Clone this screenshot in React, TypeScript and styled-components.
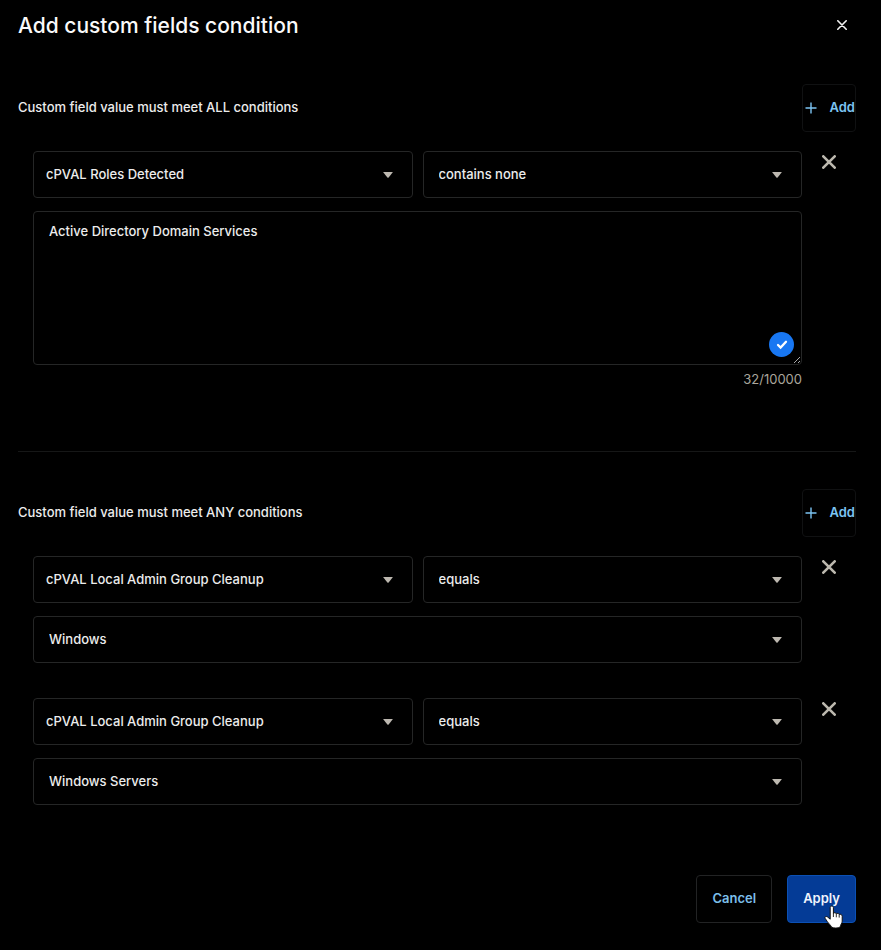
import React, { useId, useState } from "react";
import styled, { createGlobalStyle } from "styled-components";

const GlobalStyle = createGlobalStyle`
  *, *::before, *::after { box-sizing: border-box; }
  body {
    margin: 0;
    background: #000;
    color: #ececec;
    font-family: Inter, "Liberation Sans", sans-serif;
    font-size: 13px;
    line-height: 20px;
  }
  button, select, textarea { font: inherit; color: inherit; }
`;

const Dialog = styled.main`
  display: flex;
  flex-direction: column;
  padding: 10px 25px 27px 18px;
`;

const Header = styled.header`
  display: flex;
  align-items: center;
  justify-content: space-between;
  height: 30px;
  margin-bottom: 44px;
`;

const Title = styled.h1`
  margin: 0;
  padding-top: 2px;
  font-size: 21px;
  line-height: 30px;
  font-weight: 550;
  color: #fafafa;
`;

const IconButton = styled.button<{ $color: string }>`
  display: grid;
  place-items: center;
  width: 28px;
  height: 22px;
  padding: 0;
  border: 0;
  background: none;
  color: ${(p) => p.$color};
  cursor: pointer;
`;

const Section = styled.section`
  display: flex;
  flex-direction: column;
  gap: 19px;
`;

const SectionHead = styled.div`
  display: flex;
  align-items: center;
  justify-content: space-between;
`;

const SectionTitle = styled.h2`
  margin: 0;
  padding-bottom: 2px;
  font-size: 13px;
  line-height: 20px;
  font-weight: 500;
`;

const AddButton = styled.button`
  display: flex;
  align-items: center;
  justify-content: flex-end;
  gap: 13px;
  width: 54px;
  height: 48px;
  padding: 0 0 2px;
  border: 1px solid #101112;
  border-radius: 4px;
  background: none;
  color: #7cc4f2;
  font-weight: 600;
  cursor: pointer;

  svg { margin-top: 2px; }
`;

const Conditions = styled.div`
  display: flex;
  flex-direction: column;
  gap: 35px;
`;

const Condition = styled.div`
  display: grid;
  grid-template-columns: 1fr 54px;
  align-items: start;
  justify-items: center;
  padding-left: 15px;
`;

const Fields = styled.div`
  display: grid;
  grid-template-columns: 1fr 1fr;
  gap: 13px 10px;
  width: 100%;
`;

const SelectBox = styled.div<{ $wide?: boolean }>`
  display: grid;
  grid-template-columns: 1fr 12px 19px;
  align-items: center;
  grid-column: ${(p) => (p.$wide ? "1 / -1" : "auto")};

  svg {
    grid-area: 1 / 2;
    color: #bdb8b0;
    pointer-events: none;
  }
`;

const Select = styled.select<{ $inset: number }>`
  grid-area: 1 / 1 / 2 / -1;
  appearance: none;
  width: 100%;
  height: 47px;
  padding: 0 40px 2px ${(p) => p.$inset}px;
  border: 1px solid #252626;
  border-radius: 4px;
  background: #000;
  font-weight: 500;
`;

const TextField = styled.div`
  position: relative;
  display: flex;
  flex-direction: column;
  grid-column: 1 / -1;
`;

const TextArea = styled.textarea`
  display: block;
  width: 100%;
  height: 154px;
  padding: 9px 15px;
  border: 1px solid #252626;
  border-radius: 4px;
  background: #000;
  font-weight: 500;
  resize: none;
`;

const Grip = styled.svg`
  position: absolute;
  top: 145px;
  right: 1px;
`;

const CheckBadge = styled.span`
  position: absolute;
  top: 121px;
  right: 8px;
  display: grid;
  place-items: center;
  width: 25px;
  height: 25px;
  border-radius: 50%;
  background: #1877f2;
`;

const Counter = styled.output`
  align-self: flex-end;
  margin-top: 4px;
  color: #aaa69c;
`;

const Divider = styled.hr`
  width: 100%;
  height: 1px;
  margin: 62px 0 37px;
  border: 0;
  background: #161717;
`;

const Footer = styled.footer`
  display: flex;
  justify-content: flex-end;
  gap: 15px;
  margin-top: 70px;
`;

const ActionButton = styled.button<{ $primary?: boolean }>`
  position: relative;
  height: 48px;
  padding: 0 15px 2px;
  border: 1px solid ${(p) => (p.$primary ? "#0b50b4" : "#222324")};
  border-radius: 4px;
  background: ${(p) => (p.$primary ? "#043b96" : "#000")};
  color: ${(p) => (p.$primary ? "#f0f4fc" : "#7cbfea")};
  font-weight: 600;
  cursor: pointer;
`;

const Pointer = styled.svg`
  position: absolute;
  right: 11px;
  bottom: -7px;
`;

function Cross({ size, weight }: { size: number; weight: number }) {
  const end = size - weight / 2;
  const start = weight / 2;
  return (
    <svg width={size} height={size} viewBox={`0 0 ${size} ${size}`} aria-hidden="true">
      <path
        d={`M${start} ${start}L${end} ${end}M${end} ${start}L${start} ${end}`}
        stroke="currentColor"
        strokeWidth={weight}
        strokeLinecap="round"
      />
    </svg>
  );
}

function Dropdown(props: {
  label: string;
  options: string[];
  inset?: number;
  wide?: boolean;
}) {
  const [value, setValue] = useState(props.options[0]);
  return (
    <SelectBox $wide={props.wide}>
      <Select
        aria-label={props.label}
        $inset={props.inset ?? 15}
        value={value}
        onChange={(e) => setValue(e.target.value)}
      >
        {props.options.map((o) => (
          <option key={o}>{o}</option>
        ))}
      </Select>
      <svg width="12" height="8" viewBox="0 0 12 8" aria-hidden="true">
        <path d="M1.6 1H10.4Q11 1 10.6 1.5L6.6 6.4Q6 7 5.4 6.4L1.4 1.5Q1 1 1.6 1Z" fill="currentColor" />
      </svg>
    </SelectBox>
  );
}

function ConditionRow(props: {
  field: string;
  operator: string;
  children: React.ReactNode;
}) {
  return (
    <Condition>
      <Fields>
        <Dropdown label="Custom field" options={[props.field]} inset={12} />
        <Dropdown label="Operator" options={[props.operator]} />
        {props.children}
      </Fields>
      <IconButton $color="#bcb8ae" aria-label="Remove condition">
        <Cross size={14} weight={2.6} />
      </IconButton>
    </Condition>
  );
}

function SectionHeader({ title }: { title: string }) {
  return (
    <SectionHead>
      <SectionTitle>{title}</SectionTitle>
      <AddButton>
        <svg width="12" height="12" viewBox="0 0 12 12" aria-hidden="true">
          <path d="M6 .5V11.5M.5 6H11.5" stroke="currentColor" strokeWidth="1.4" />
        </svg>
        Add
      </AddButton>
    </SectionHead>
  );
}

function ValueText() {
  const id = useId();
  const [text, setText] = useState("Active Directory Domain Services");
  return (
    <TextField>
      <TextArea
        id={id}
        aria-label="Value"
        spellCheck={false}
        value={text}
        onChange={(e) => setText(e.target.value)}
      />
      <CheckBadge>
        <svg width="13" height="11" viewBox="0 0 13 11" aria-hidden="true">
          <path d="M3 6L5.6 8.6L11 2.8" fill="none" stroke="#fff" strokeWidth="2.3" strokeLinecap="round" />
        </svg>
      </CheckBadge>
      <Grip width="8" height="8" viewBox="0 0 8 8" aria-hidden="true">
        <path d="M1 7L7 1M5 7L7 5" stroke="#aaa" strokeWidth="1" />
      </Grip>
      <Counter htmlFor={id}>{text.length}/10000</Counter>
    </TextField>
  );
}

export default function App() {
  return (
    <>
      <GlobalStyle />
      <Dialog>
        <Header>
          <Title>Add custom fields condition</Title>
          <IconButton $color="#f2f2f2" aria-label="Close">
            <Cross size={10} weight={1.6} />
          </IconButton>
        </Header>
        <Section>
          <SectionHeader title="Custom field value must meet ALL conditions" />
          <Conditions>
            <ConditionRow field="cPVAL Roles Detected" operator="contains none">
              <ValueText />
            </ConditionRow>
          </Conditions>
        </Section>
        <Divider />
        <Section>
          <SectionHeader title="Custom field value must meet ANY conditions" />
          <Conditions>
            <ConditionRow field="cPVAL Local Admin Group Cleanup" operator="equals">
              <Dropdown label="Value" options={["Windows", "Windows Servers"]} wide />
            </ConditionRow>
            <ConditionRow field="cPVAL Local Admin Group Cleanup" operator="equals">
              <Dropdown label="Value" options={["Windows Servers", "Windows"]} wide />
            </ConditionRow>
          </Conditions>
        </Section>
        <Footer>
          <ActionButton>Cancel</ActionButton>
          <ActionButton $primary>
            Apply
            <Pointer width="20" height="24" viewBox="0 0 20 24" aria-hidden="true">
              <path
                d="M6.2 2.6C6.2 .6 9.4 .6 9.4 2.6V8.2C10 7.4 12.1 7.6 12.3 8.8C13 8 15 8.3 15.2 9.5C16.2 8.9 18.2 9.3 18.2 11.3V16.2C18.2 18.2 16.4 19.6 16.2 22C14 23.4 9.6 23.4 7.4 22C7.2 20.6 4.4 18.4 3.2 16.4L1.2 13.4C.3 11.8 2.2 10.8 3.6 12L6.2 14.2Z"
                fill="#fff"
                stroke="#111"
                strokeWidth="1"
              />
              <path d="M9.4 8V12M12.3 9V12.3M15.2 9.8V12.6" stroke="#111" strokeWidth=".9" />
            </Pointer>
          </ActionButton>
        </Footer>
      </Dialog>
    </>
  );
}
